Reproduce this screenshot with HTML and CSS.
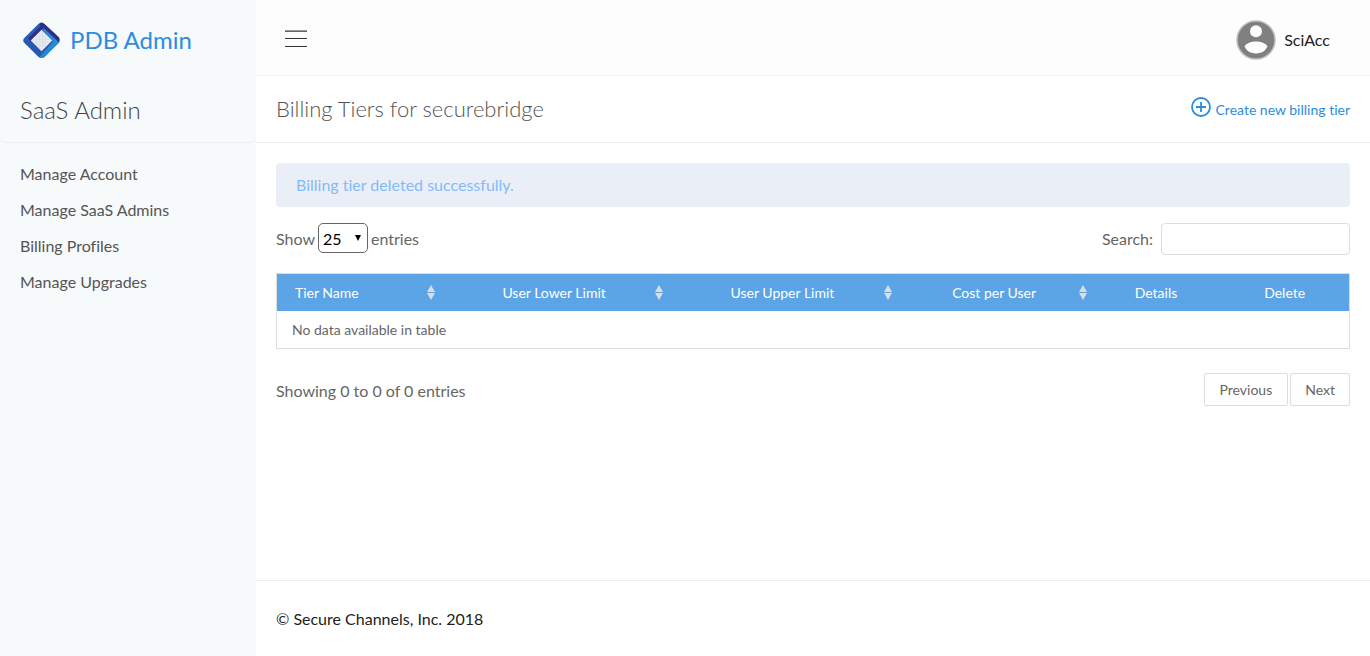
FILE: index.html
```html
<!DOCTYPE html>
<html lang="en">
<head>
<meta charset="utf-8">
<title>PDB Admin - Billing Tiers</title>
<link rel="stylesheet" href="styles.css">
</head>
<body>
<div class="app">
  <aside class="sidebar">
    <a class="brand" href="#">
      <svg class="brand-logo" viewBox="0 0 38 38" aria-hidden="true">
        <path d="M16 2Q19 -1 22 2L37 16Q38 18 37 21L22 36Q19 38 16 36L1 21Q0 19 1 17Z" fill="#2859ae"/>
        <path d="M17 2Q19 0 22 2L37 16Q38 18 37 21L30 15 21 6 8 20 5 16 17 5Z" fill="#2b3286"/>
        <path d="M16 2L1 17Q0 19 1 21L5 17 18 4Z" fill="#285fb6"/>
        <path d="M22 7L37 21 22 36Q19 38 17 36L31 20 20 8Z" fill="#278bce"/>
        <path d="M19 8L30 19 19 30 8 19Z" fill="#e8eaed"/>
        <path d="M14 14V24M17 11V27M20 10V28M23 13V25M11 18H27M12 21H26M15 24H23M14 15H24" fill="none" stroke="#d7dadd" stroke-width=".6"/>
      </svg>
      <span>PDB Admin</span>
    </a>
    <h2 class="section-title">SaaS Admin</h2>
    <nav class="menu">
      <a href="#">Manage Account</a>
      <a href="#">Manage SaaS Admins</a>
      <a href="#">Billing Profiles</a>
      <a href="#">Manage Upgrades</a>
    </nav>
  </aside>
  <div class="page">
    <header class="topbar">
      <button class="toggle" type="button" aria-label="Toggle menu">
        <svg viewBox="0 0 22 20" aria-hidden="true"><path d="M0 1.100H22M0 8.500H22M0 16.500H22" stroke="#333" stroke-width="1.200"/></svg>
      </button>
      <a class="user" href="#">
        <svg viewBox="0 0 40 40" aria-hidden="true">
          <circle cx="20" cy="20" r="19" fill="#808080" stroke="#b9c0c8" stroke-width="1.5"/>
          <circle cx="20" cy="11.300" r="6" fill="#fff"/>
          <path d="M8.500 26.500Q12 21.500 20 21.500T31.500 26.500Q28 33.500 20 33.500T8.500 26.500Z" fill="#fff"/>
        </svg>
        <span>SciAcc</span>
      </a>
    </header>
    <div class="heading">
      <h1>Billing Tiers for securebridge</h1>
      <a class="create" href="#">
        <svg viewBox="0 0 20 20" aria-hidden="true"><circle cx="10" cy="10" r="9" fill="none" stroke="#2c8cde" stroke-width="1.8"/><path d="M10 5V15M5 10H15" stroke="#2c8cde" stroke-width="1.8"/></svg>
        <span>Create new billing tier</span>
      </a>
    </div>
    <main class="content">
      <div class="alert" role="status">Billing tier deleted successfully.</div>
      <div class="controls">
        <div class="length">
          <label for="length">Show</label>
          <span class="select-box"><select id="length" aria-label="Show entries"><option>10</option><option selected>25</option><option>50</option><option>100</option></select></span>
          <span>entries</span>
        </div>
        <div class="search"><label for="search">Search:</label><input id="search" type="search"></div>
      </div>
      <table class="tiers">
        <colgroup><col class="col-name"><col class="col-limit"><col class="col-limit"><col class="col-cost"><col class="col-action"><col class="col-action"></colgroup>
        <thead>
          <tr>
            <th class="sortable name">Tier Name</th>
            <th class="sortable">User Lower Limit</th>
            <th class="sortable">User Upper Limit</th>
            <th class="sortable">Cost per User</th>
            <th>Details</th>
            <th>Delete</th>
          </tr>
        </thead>
        <tbody><tr><td colspan="6">No data available in table</td></tr></tbody>
      </table>
      <div class="summary">
        <span class="count">Showing 0 to 0 of 0 entries</span>
        <div class="pager"><button type="button">Previous</button><button type="button">Next</button></div>
      </div>
    </main>
    <footer class="footer">© Secure Channels, Inc. 2018</footer>
  </div>
</div>
</body>
</html>
```
FILE: styles.css
```css
* { box-sizing: border-box; }
body {
  margin: 0;
  background: #fff;
  color: #666;
  font: 16px/24px Lato, "Liberation Sans", sans-serif;
  font-variant-ligatures: no-common-ligatures;
}
a { text-decoration: none; }
button, input, select { font: inherit; }
svg { display: block; flex: none; }

.app { display: flex; min-height: 100vh; }
.sidebar { flex: 0 0 256px; background: #f6fafb; }
.brand {
  display: flex;
  align-items: center;
  gap: 10px;
  height: 80px;
  padding: 0 23px;
  color: #2c8cde;
  font-size: 24px;
}
.brand-logo { width: 37px; height: 37px; }
.section-title {
  height: 63px;
  margin: 0;
  padding: 14px 20px;
  border-bottom: 1px solid #ebeff1;
  border-radius: 0 0 6px 6px;
  color: #444;
  font-size: 24px;
  line-height: 32px;
  font-weight: 300;
}
.menu { display: flex; flex-direction: column; padding: 13px 20px; }
.menu a { color: #555; line-height: 36px; }

.page { display: flex; flex: 1; flex-direction: column; min-width: 0; }
.topbar {
  display: flex;
  align-items: center;
  justify-content: space-between;
  height: 76px;
  padding: 4px 40px 0 29px;
  border-bottom: 1px solid #f3f3f3;
  background: #fdfdfd;
}
.toggle { padding: 0; border: 0; background: none; }
.toggle svg { width: 22px; height: 20px; }
.user { display: flex; align-items: center; gap: 8px; color: #222; }
.user svg { width: 40px; height: 40px; }
.heading {
  display: flex;
  align-items: center;
  justify-content: space-between;
  height: 67px;
  padding: 0 20px;
  border-bottom: 1px solid #e9edf4;
}
.heading h1 { margin: 0; color: #555; font-size: 22px; font-weight: 300; }
.create { display: flex; gap: 5px; color: #2c8cde; font-size: 14px; line-height: 32px; }
.create svg { width: 20px; height: 20px; margin-top: 5px; }
.create span { padding-top: 2px; }

.content { flex: 1; padding: 20px; }
.alert {
  padding: 10px 20px;
  border-radius: 4px;
  background: #eaeff7;
  color: #83bbf8;
}
.controls { display: flex; justify-content: space-between; margin: 16px 0 18px; }
.length { display: flex; align-items: center; gap: 3px; height: 32px; }
.select-box { position: relative; display: flex; height: 32px; }
.select-box::after {
  content: "";
  position: absolute;
  top: 12px;
  right: 7px;
  border: 3px solid transparent;
  border-top: 6px solid #000;
  border-bottom: 0;
  pointer-events: none;
}
.select-box select {
  appearance: none;
  width: 50px;
  height: 30px;
  padding: 1px 4px 0;
  border: 1px solid #666;
  border-radius: 5px;
  background: #fff;
  color: #000;
}
.search { display: flex; align-items: center; gap: 8px; }
.search input {
  width: 189px;
  height: 32px;
  padding: 4px 8px;
  border: 1px solid #ddd;
  border-radius: 4px;
  background: #fff;
}
.tiers {
  width: 100%;
  border: 1px solid #ddd;
  border-spacing: 0;
  table-layout: fixed;
  font-size: 14px;
}
.col-name { width: 15.2%; }
.col-limit { width: 21.3%; }
.col-cost { width: 18.2%; }
.col-action { width: 12%; }
.tiers th {
  height: 37px;
  padding: 0 18px;
  background: #5ba4e6;
  color: #fff;
  font-weight: 400;
}
.tiers .name { text-align: left; }
.tiers .sortable { position: relative; }
.sortable::before, .sortable::after {
  content: "";
  position: absolute;
  right: 5px;
  border: 4px solid transparent;
}
.sortable::before { top: 11px; border-top: 0; border-bottom: 7px solid #ddd; }
.sortable::after { top: 19px; border-bottom: 0; border-top: 7px solid #ddd; }
.tiers td { height: 37px; padding: 0 15px; }
.summary { display: flex; justify-content: space-between; align-items: center; margin-top: 24px; }
.count { padding-top: 2px; }
.pager { display: flex; gap: 2px; }
.pager button {
  height: 33px;
  padding: 0 14px;
  border: 1px solid #ddd;
  border-radius: 2px;
  background: #fff;
  color: #666;
  font-size: 14px;
}
.pager button:first-child { padding: 0 15px; }
.footer { height: 76px; padding: 26px 20px; border-top: 1px solid #e9edf4; color: #222; }
```
